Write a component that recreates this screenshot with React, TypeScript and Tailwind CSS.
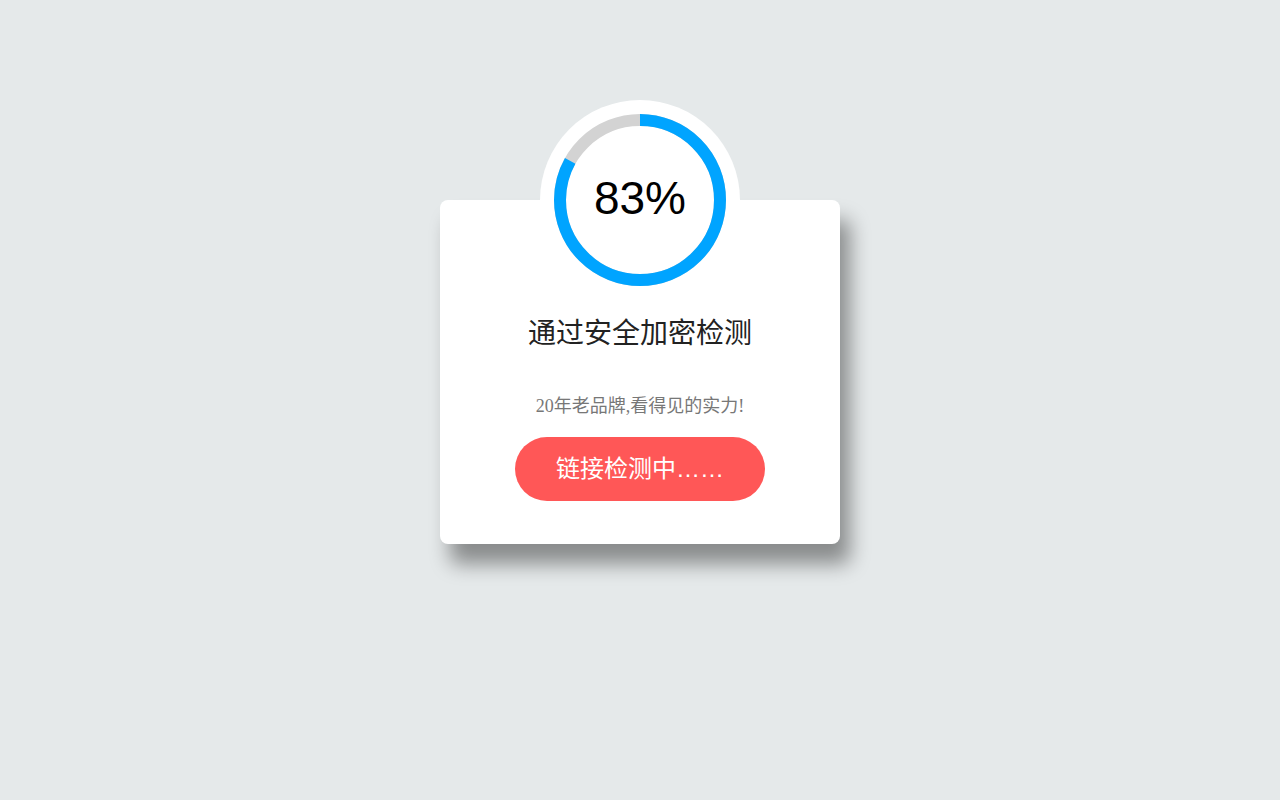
import React from "react";

export default function App() {
  const r = 80;
  const c = 2 * Math.PI * r;
  const pct = 83;
  return (
    <div className="min-h-screen w-full bg-[#e5e9ea] pt-[200px] font-['Liberation_Sans','Noto_Sans_CJK_SC',sans-serif]">
      <div className="mx-auto flex h-[344px] w-[400px] flex-col items-center rounded-[8px] bg-white shadow-[10px_20px_20px_rgba(0,0,0,0.4)]">
        <div className="relative -mt-[100px] flex h-[200px] w-[200px] shrink-0 items-center justify-center rounded-full bg-white pb-[4px]">
          <svg width="200" height="200" viewBox="0 0 200 200" className="absolute left-0 top-0">
            <circle cx="100" cy="100" r={r} fill="none" stroke="#d3d3d3" strokeWidth="12" />
            <circle
              cx="100"
              cy="100"
              r={r}
              fill="none"
              stroke="#00a4ff"
              strokeWidth="12"
              strokeDasharray={`${(c * pct) / 100} ${c}`}
              transform="rotate(-90 100 100)"
            />
          </svg>
          <span className="relative font-['Liberation_Sans',Arial,sans-serif] text-[46px] leading-none text-black">
            83%
          </span>
        </div>
        <div className="mt-[10px] font-['Noto_Sans_CJK_SC',sans-serif] text-[28px] leading-[42px] text-[#222]">
          通过安全加密检测
        </div>
        <div className="mt-[41px] font-['Liberation_Serif','Noto_Sans_CJK_SC',serif] text-[18px] leading-[27px] text-[#777]">
          20年老品牌,看得见的实力!
        </div>
        <button className="mt-[17px] flex h-[64px] w-[250px] items-center justify-center rounded-full bg-[#ff5757] font-['Liberation_Sans','Noto_Sans_CJK_SC',sans-serif] text-[24px] text-white">
          链接检测中……
        </button>
      </div>
    </div>
  );
}
